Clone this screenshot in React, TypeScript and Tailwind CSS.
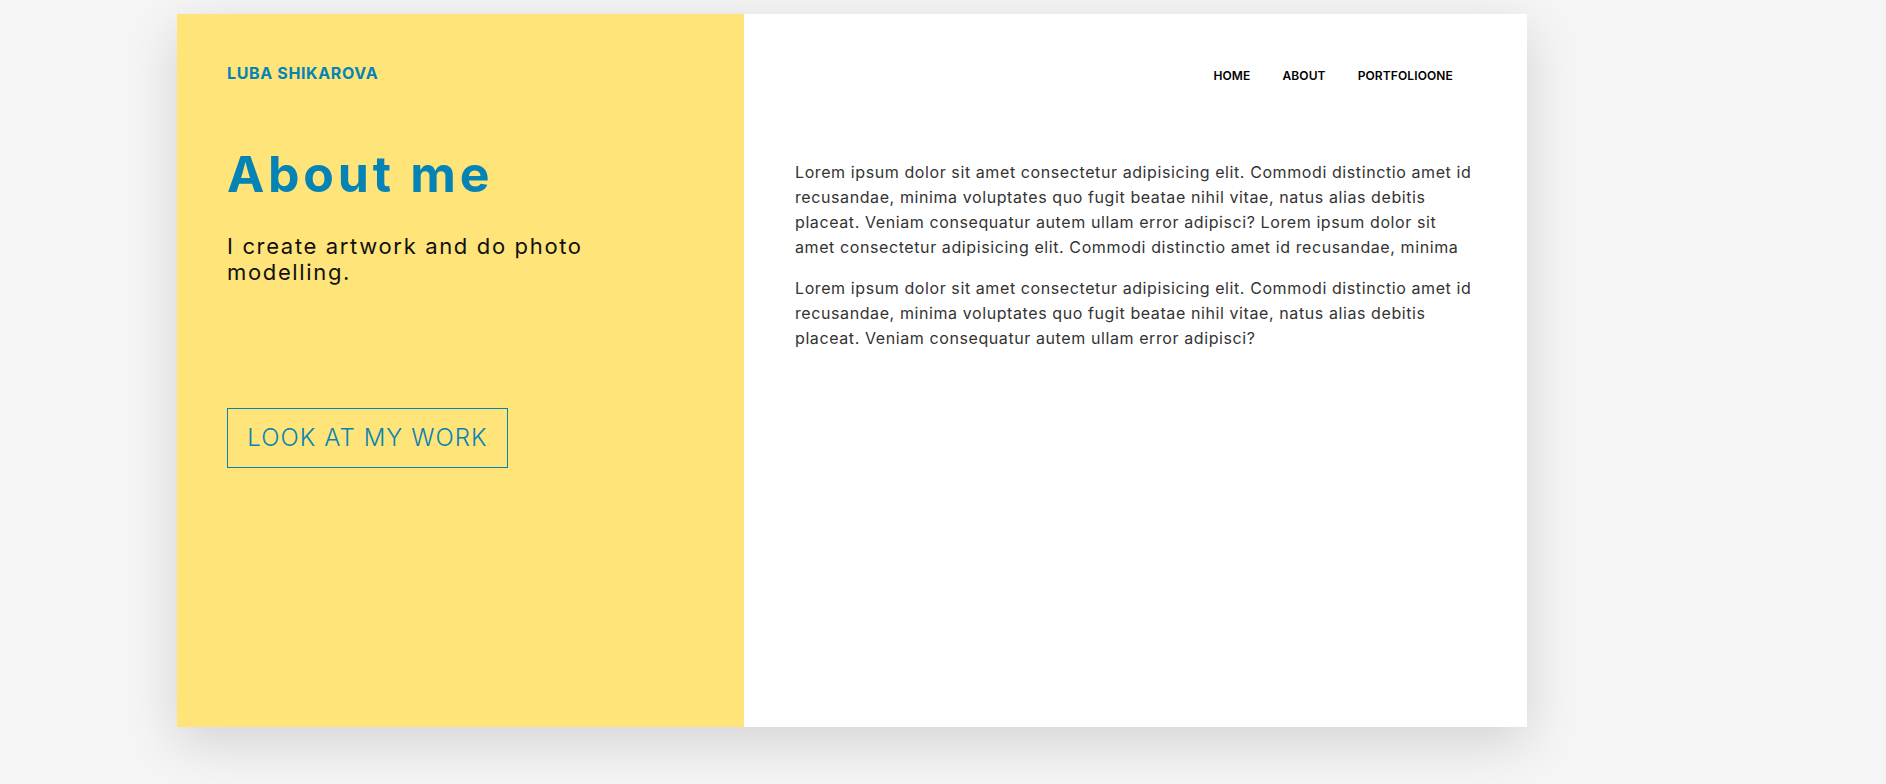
import React from "react";

const navLinks = ["HOME", "ABOUT", "PORTFOLIOONE"];

const para1 = [
  "Lorem ipsum dolor sit amet consectetur adipisicing elit. Commodi distinctio amet id",
  "recusandae, minima voluptates quo fugit beatae nihil vitae, natus alias debitis",
  "placeat. Veniam consequatur autem ullam error adipisci? Lorem ipsum dolor sit",
  "amet consectetur adipisicing elit. Commodi distinctio amet id recusandae, minima",
];

const para2 = [
  "Lorem ipsum dolor sit amet consectetur adipisicing elit. Commodi distinctio amet id",
  "recusandae, minima voluptates quo fugit beatae nihil vitae, natus alias debitis",
  "placeat. Veniam consequatur autem ullam error adipisci?",
];

function Lines({ lines }: { lines: string[] }) {
  return (
    <>
      {lines.map((l, i) => (
        <span key={i} className="block whitespace-nowrap">
          {l}
        </span>
      ))}
    </>
  );
}

export default function App() {
  return (
    <div className="min-h-screen w-full bg-[#f5f5f5] pt-[14px] font-['Inter',sans-serif]">
      <div className="ml-[177px] flex h-[713px] w-[1350px] bg-white shadow-[0_15px_50px_rgba(0,0,0,0.14)]">
        {/* Left column */}
        <div className="flex w-[567px] flex-col bg-[#ffe479] pl-[50px] pt-[49px]">
          <div className="text-[16px] font-bold leading-[20px] tracking-[0.04em] text-[#0683b5]">
            LUBA SHIKAROVA
          </div>
          <h1 className="mt-[63px] text-[50px] font-bold leading-[56px] tracking-[0.075em] text-[#0683b5]">
            About me
          </h1>
          <p className="mt-[31px] w-[420px] text-[22px] leading-[26px] tracking-[0.075em] text-[#111]">
            I create artwork and do photo modelling.
          </p>
          <button className="mt-[123px] h-[60px] w-[281px] border border-[#0683b5] text-[24px] font-light tracking-[0.045em] text-[#0683b5]">
            LOOK AT MY WORK
          </button>
        </div>

        {/* Right column */}
        <div className="flex flex-1 flex-col pl-[51px] pr-[50px]">
          <nav className="flex justify-end gap-[32px] pr-[24px] pt-[54px]">
            {navLinks.map((link) => (
              <a
                key={link}
                href="#"
                className="text-[12px] font-semibold leading-[16px] tracking-[0.01em] text-black"
              >
                {link}
              </a>
            ))}
          </nav>
          <div className="mt-[76px] text-[16px] leading-[25px] tracking-[0.037em] text-[#333]">
            <p>
              <Lines lines={para1} />
            </p>
            <p className="mt-[16px]">
              <Lines lines={para2} />
            </p>
          </div>
        </div>
      </div>
    </div>
  );
}
